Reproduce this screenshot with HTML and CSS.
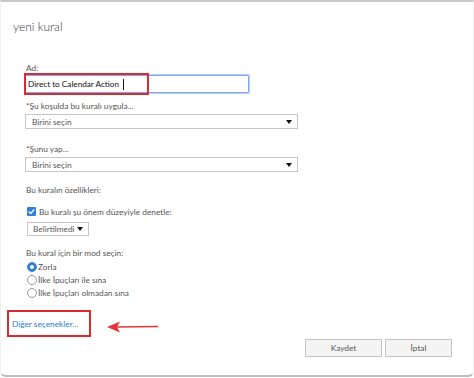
FILE: index.html
```html
<!DOCTYPE html>
<html lang="tr">
<head>
    <meta charset="UTF-8">
    <meta name="viewport" content="width=device-width, initial-scale=1.0">
    <title>yeni kural</title>
    <link rel="stylesheet" href="styles.css">
</head>
<body>
    <div class="dialog">
        <h1 class="dialog-title">yeni kural</h1>

        <div class="form">
            <label class="field-label label-name">Ad:</label>
            <div class="text-input">
                <span class="text-value">Direct to Calendar Action</span><span class="caret"></span>
                <span class="highlight-box name-highlight"></span>
            </div>

            <label class="field-label label-gap">*Şu koşulda bu kuralı uygula...</label>
            <div class="select wide">
                <span>Birini seçin</span>
                <span class="select-arrow"></span>
            </div>

            <label class="field-label label-gap-lg">*Şunu yap...</label>
            <div class="select wide">
                <span>Birini seçin</span>
                <span class="select-arrow"></span>
            </div>

            <div class="field-label label-gap-md">Bu kuralın özellikleri:</div>

            <div class="check-row">
                <span class="checkbox">
                    <svg width="9" height="9" viewBox="0 0 9 9">
                        <path d="M1.8 4.6 L3.7 6.4 L7.3 2.4" fill="none" stroke="#fff" stroke-width="1.4"/>
                    </svg>
                </span>
                <span>Bu kuralı şu önem düzeyiyle denetle:</span>
            </div>
            <div class="select small">
                <span>Belirtilmedi</span>
                <span class="select-arrow"></span>
            </div>

            <div class="field-label label-gap-mode">Bu kural için bir mod seçin:</div>
            <div class="radio-list">
                <div class="radio-row"><span class="radio checked"></span>Zorla</div>
                <div class="radio-row"><span class="radio"></span>İlke İpuçları ile sına</div>
                <div class="radio-row"><span class="radio"></span>İlke İpuçları olmadan sına</div>
            </div>
        </div>

        <div class="more-row">
            <span class="more-box"><a href="#" class="more-link">Diğer seçenekler...</a></span>
            <svg class="pointer-arrow" width="52" height="14" viewBox="0 0 52 14">
                <line x1="8" y1="7" x2="51" y2="6.5" stroke="#e2373a" stroke-width="1.6"/>
                <path d="M0 7 L13 1.5 L10 7 L13 12.5 Z" fill="#e2373a"/>
            </svg>
        </div>

        <div class="actions">
            <button class="btn">Kaydet</button>
            <button class="btn btn-cancel">İptal</button>
        </div>
    </div>
</body>
</html>
```

FILE: styles.css
```css
* {
    box-sizing: border-box;
}

body {
    margin: 0;
    background: #fff;
    font-family: Lato, "Open Sans", sans-serif;
    color: #555;
}

.dialog {
    position: relative;
    width: 474px;
    height: 377px;
    border-top: 2px solid #c9c9c9;
    border-bottom: 2px solid #bdbdbd;
    border-left: 1px solid #f0f0f0;
    border-right: 1px solid #f0f0f0;
    border-radius: 0 0 6px 6px;
    background: #fff;
}

.dialog-title {
    margin: 15px 0 0 12px;
    font-size: 12px;
    line-height: 20px;
    font-weight: 300;
    color: #333;
}

.form {
    padding-left: 24px;
}

.field-label {
    display: block;
    font-size: 8.3px;
    line-height: 12px;
    color: #555;
    padding-left: 1px;
}

.label-name {
    margin-top: 25px;
}

.label-gap {
    margin-top: 7px;
}

.label-gap-lg {
    margin-top: 14px;
}

.label-gap-md {
    margin-top: 12px;
}

.label-gap-mode {
    margin-top: 11px;
}

.text-input {
    position: relative;
    display: flex;
    align-items: center;
    width: 224px;
    height: 18px;
    margin-top: 1px;
    padding-left: 2px;
    border: 1px solid #7eaaf0;
    box-shadow: 0 0 0 1px #b3cdf7;
    border-radius: 1px;
    font-size: 8.2px;
    color: #111;
}

.caret {
    display: inline-block;
    width: 1px;
    height: 11px;
    margin-left: 4px;
    background: #111;
}

.highlight-box {
    position: absolute;
    border: 2px solid #dc2a2e;
}

.name-highlight {
    left: -2px;
    top: -3px;
    width: 125px;
    height: 22px;
}

.select {
    display: flex;
    align-items: center;
    justify-content: space-between;
    height: 15px;
    margin-top: 2px;
    padding: 0 5px 0 6px;
    border: 1px solid #c6c6c6;
    font-size: 8.3px;
    color: #555;
    background: #fff;
}

.select.wide {
    width: 273px;
}

.select.small {
    width: 62px;
    height: 14px;
    margin-top: 4px;
    margin-left: 2px;
    padding-left: 5px;
}

.select-arrow {
    width: 0;
    height: 0;
    border-left: 3px solid transparent;
    border-right: 3px solid transparent;
    border-top: 4px solid #111;
}

.check-row {
    display: flex;
    align-items: center;
    gap: 3px;
    height: 13px;
    margin-top: 9px;
    padding-left: 2px;
    font-size: 8.3px;
}

.checkbox {
    display: flex;
    align-items: center;
    justify-content: center;
    width: 9px;
    height: 9px;
    border-radius: 1px;
    background: #2f7fe0;
}

.radio-list {
    padding-left: 2px;
}

.radio-row {
    display: flex;
    align-items: center;
    gap: 1px;
    height: 13px;
    font-size: 8.3px;
}

.radio-row:first-child {
    margin-top: 1px;
}

.radio {
    width: 10px;
    height: 10px;
    border: 1px solid #9a9a9a;
    border-radius: 50%;
    background: #fff;
}

.radio.checked {
    border-color: #2f7fe0;
    background: radial-gradient(circle, #fff 0 1.6px, #2f7fe0 2.2px);
}

.more-row {
    display: flex;
    align-items: center;
    gap: 16px;
    margin-top: 11px;
    margin-left: 6px;
}

.more-box {
    display: flex;
    align-items: center;
    width: 84px;
    height: 27px;
    padding-left: 3px;
    border: 2px solid #dc2a2e;
}

.more-link {
    font-size: 8.3px;
    color: #2b7cd3;
    text-decoration: none;
}

.pointer-arrow {
    margin-top: 6px;
}

.actions {
    display: flex;
    justify-content: flex-end;
    gap: 3px;
    margin-top: 2px;
    padding-right: 21px;
}

.btn {
    height: 18px;
    width: 77px;
    padding: 0;
    border: 1px solid #c3c3c3;
    background: #f4f4f4;
    font-family: inherit;
    font-size: 8.3px;
    color: #555;
}

.btn-cancel {
    width: 67px;
}
```
